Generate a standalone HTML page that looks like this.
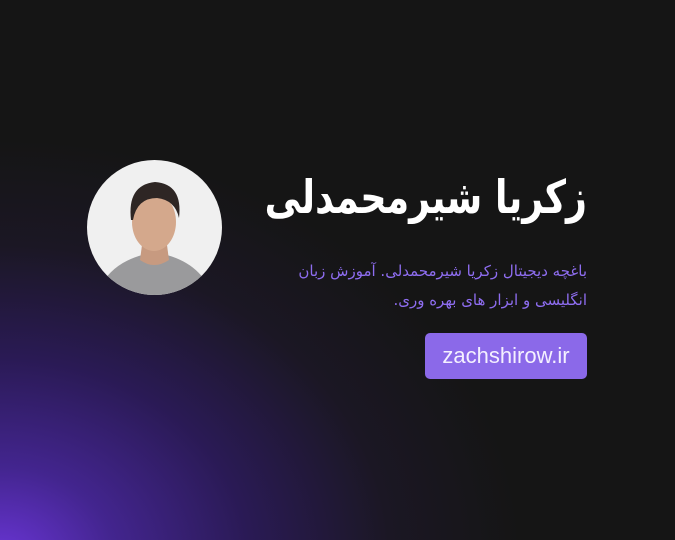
<!DOCTYPE html>
<html><head><meta charset="utf-8"><style>
html,body{margin:0;padding:0}
body{width:675px;height:540px;overflow:hidden;position:relative;background:#151515;
background:radial-gradient(ellipse 520px 420px at 0px 560px,#6a35d6 0%,#43258f 22%,#2a1a55 48%,#1b1724 75%,#151515 100%);}
.av{position:absolute;left:87px;top:160px;width:135px;height:135px;border-radius:50%;background:#f0f0f0;overflow:hidden}
.t{position:absolute;right:88px;top:170px;direction:rtl;font-family:"DejaVu Sans",sans-serif;font-weight:bold;font-size:46px;color:#fff;white-space:nowrap;transform:scaleX(0.79);transform-origin:right center}
.s{position:absolute;right:88px;top:257px;width:360px;direction:rtl;text-align:right;font-family:"DejaVu Sans",sans-serif;font-size:15px;line-height:29px;color:#8e6df0;white-space:nowrap}
.b{position:absolute;left:425px;top:333px;width:162px;height:46px;border-radius:5px;background:#8b69e9;color:#f4f0ff;font-family:"Liberation Sans",sans-serif;font-size:22px;line-height:46px;text-align:center}
</style></head><body>
<div class="av"><svg width="135" height="135" viewBox="0 0 135 135">
<path d="M10 135 Q20 105 55 95 L80 95 Q115 105 125 135Z" fill="#9a9a9c"/>
<path d="M55 85 L80 85 L82 100 Q67 110 53 100Z" fill="#c79a80"/>
<ellipse cx="67" cy="62" rx="22" ry="29" fill="#d4a88c"/>
<path d="M44 60 Q40 25 68 22 Q96 24 92 58 Q88 40 70 38 Q50 38 46 60Z" fill="#2e2624"/>
</svg></div>
<div class="t">زکریا شیرمحمدلی</div>
<div class="s">باغچه دیجیتال زکریا شیرمحمدلی. آموزش زبان<br>انگلیسی و ابزار های بهره وری.</div>
<div class="b">zachshirow.ir</div>
</body></html>
